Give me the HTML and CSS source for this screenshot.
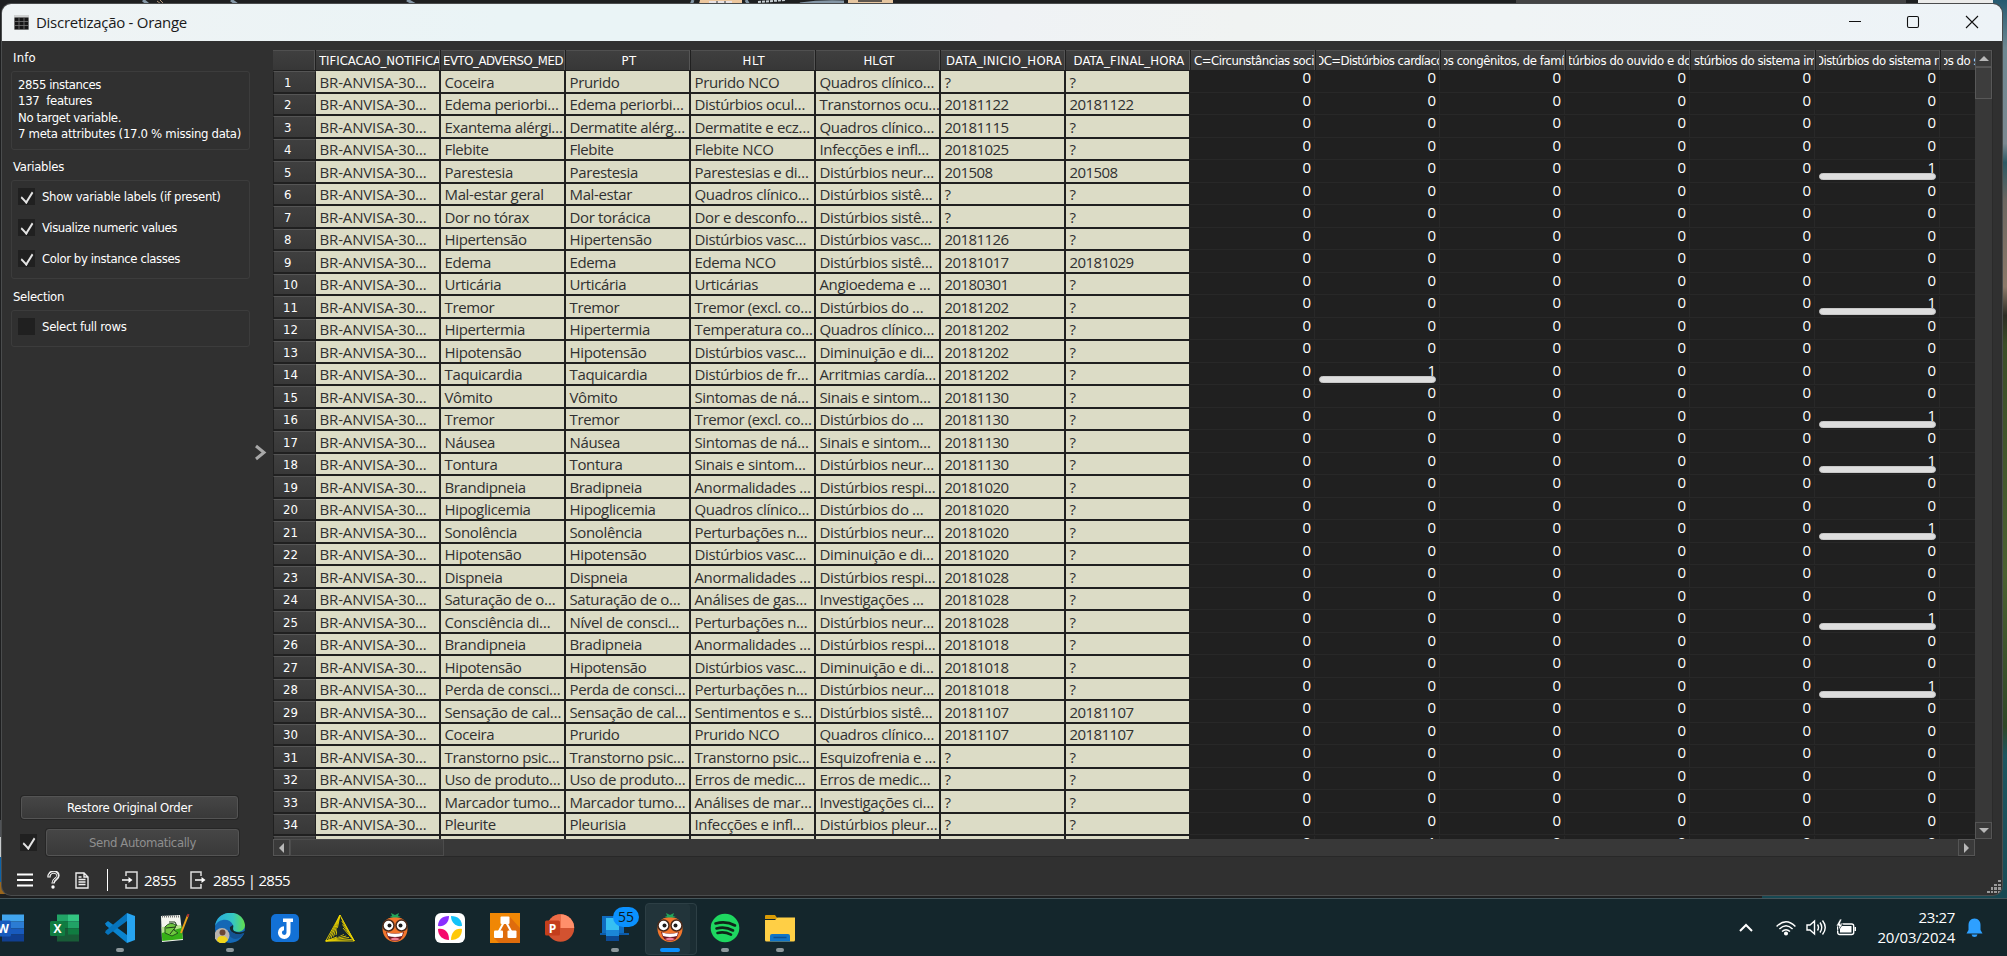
FILE: index.html
```
<!DOCTYPE html>
<html lang="pt">
<head>
<meta charset="utf-8">
<title>Discretização - Orange</title>
<link rel="stylesheet" href="styles.css">
</head>
<body>
<div class="desktop">
  <svg class="wallpaper" width="2007" height="956" viewBox="0 0 2007 956">
    <defs>
      <linearGradient id="photo" x1="0" y1="0" x2="0" y2="1">
        <stop offset="0" stop-color="#265a70"/><stop offset=".05" stop-color="#6d8791"/><stop offset=".15" stop-color="#7b8890"/>
        <stop offset=".17" stop-color="#2c5964"/><stop offset=".21" stop-color="#6c6660"/><stop offset=".3" stop-color="#8c7969"/>
        <stop offset=".33" stop-color="#2d2d25"/><stop offset=".36" stop-color="#3b4d27"/><stop offset=".6" stop-color="#4b6030"/>
        <stop offset=".76" stop-color="#304726"/><stop offset=".79" stop-color="#1d5560"/><stop offset="1" stop-color="#174852"/>
      </linearGradient>
    </defs>
    <rect width="2007" height="956" fill="#1e1f20"/>
    <rect x="1993" width="14" height="956" fill="url(#photo)"/>
    <rect x="1762" y="890" width="245" height="10" fill="#174852"/>
    <path d="M143 0l6 5M231 0l7 5M407 0l9 5M693 0l-2 5M746 0l3 5" stroke="#8496a5" stroke-width="3"/>
    <path d="M157 1l4 3M160 0l4 4" stroke="#b49a80"/>
    <path d="M700 0h42v4h-43z" fill="#edc79e"/><path d="M709 1h23v3h-23z" fill="#e8e0e2"/><path d="M717 1v3M725 1v3" stroke="#333"/>
    <path d="M848 0h45v4h-45z" fill="#e6c6a0"/><path d="M858 0h24v2h-24z" fill="#5e564e"/>
    <path d="M800 4q20-3 44-2" stroke="#8496a5" stroke-width="3" fill="none"/>
    <path d="M758 2l28-2" stroke="#c9cfd3" stroke-width="2" stroke-dasharray="3 1"/>
    <rect x="1516" width="390" height="3" fill="#444"/>
    <rect x="1918" width="75" height="4" fill="#ebebea"/>
    <rect y="820" width="3" height="17" fill="#505357"/><rect y="837" width="3" height="20" fill="#c9cbcc"/><rect y="857" width="3" height="25" fill="#0d63a8"/><rect y="882" width="10" height="12" fill="#9a661c"/>
  </svg>

  <main class="window">
    <header class="titlebar">
      <svg class="appicon" width="15" height="15" viewBox="0 0 15 15"><rect width="15" height="15" fill="#cfd1d1"/><path d="M.5 2.500h14v12H.5z" fill="#161616"/><path d="M0 6.500h15M0 10.500h15M5 2v13M10 2v13" stroke="#777" stroke-width=".8"/></svg>
      <span class="title seg" data-w="150">Discretização - Orange</span>
      <svg class="winbtns" width="130" height="14" viewBox="0 0 130 14" fill="none" stroke="#111" stroke-width="1.1"><path d="M0 6.500h12"/><rect x="58.500" y="1.500" width="11" height="11" rx="1.500"/><path d="M117 1l12 12M129 1l-12 12"/></svg>
    </header>

    <div class="content">
      <aside class="side">
        <h2 class="group" data-w="22">Info</h2>
        <section class="box info">
          <p><span data-w="82">2855 instances</span></p>
          <p><span data-w="73">137&nbsp; features</span></p>
          <p><span data-w="102">No target variable.</span></p>
          <p><span data-w="222">7 meta attributes (17.0 % missing data)</span></p>
        </section>
        <h2 class="group" data-w="50">Variables</h2>
        <section class="box vars">
          <label class="check"><i class="tick on"></i><span data-w="177.5">Show variable labels (if present)</span></label>
          <label class="check"><i class="tick on"></i><span data-w="134">Visualize numeric values</span></label>
          <label class="check"><i class="tick on"></i><span data-w="137">Color by instance classes</span></label>
        </section>
        <h2 class="group" data-w="50">Selection</h2>
        <section class="box selbox">
          <label class="check"><i class="tick"></i><span data-w="83.5">Select full rows</span></label>
        </section>
        <div class="spacer"></div>
        <button class="btn restore"><span data-w="124">Restore Original Order</span></button>
        <div class="sendrow"><i class="tick on"></i><button class="btn send"><span data-w="106">Send Automatically</span></button></div>
      </aside>

      <div class="handle"><svg width="13" height="17" viewBox="0 0 13 17"><path d="M2 2l8 6.500L2 15" fill="none" stroke="#a8a8a8" stroke-width="3"/></svg></div>

      <section class="tablebox">
        <div class="viewport">
          <div class="headrow" id="head"></div>
          <div class="rows" id="rows"></div>
        </div>
        <div class="vbar">
          <div class="sbtn"><i class="arrow up"></i></div>
          <div class="vthumb"></div>
          <div class="fill"></div>
          <div class="sbtn"><i class="arrow down"></i></div>
        </div>
        <div class="hbar">
          <div class="sbtn"><i class="arrow left"></i></div>
          <div class="hthumb"></div>
          <div class="fill"></div>
          <div class="sbtn"><i class="arrow right"></i></div>
        </div>
      </section>
    </div>

    <footer class="status">
      <svg width="16" height="14" viewBox="0 0 16 14"><path d="M0 1.500h16M0 7h16M0 12.500h16" stroke="#fff" stroke-width="2.200"/></svg>
      <svg class="help" width="13" height="18" viewBox="0 0 13 18" fill="none"><path d="M2 6.500C1.500-.5 11-.5 11 4.500c0 4-5 3.500-5 8" stroke="#eee" stroke-width="3.400"/><path d="M2 5.500C2 .5 10.500 0 10.500 4.500c0 3.500-4.500 3.500-4.500 7" stroke="#333" stroke-width="1"/><circle cx="6" cy="16" r="1.700" fill="#fff"/></svg>
      <svg class="doc" width="14" height="17" viewBox="0 0 14 17" fill="none" stroke="#eee" stroke-width="1.400"><path d="M1 1h8l4 4v11H1zM9 1v4h4M3.500 7.500h7M3.500 10h7M3.500 12.500h7M3.500 5h3"/></svg>
      <i class="vsep"></i>
      <svg class="in" width="16" height="18" viewBox="0 0 16 18" fill="none" stroke="#ddd" stroke-width="1.500"><path d="M4 5V1h11v16H4v-4"/><path d="M0 9h8" stroke="#fff"/><path d="M6.500 6l4 3-4 3z" fill="#fff" stroke="none"/></svg>
      <span class="seg n1" data-w="31">2855</span>
      <svg class="out" width="16" height="18" viewBox="0 0 16 18" fill="none" stroke="#ddd" stroke-width="1.500"><path d="M11 5V1H1v16h10v-4"/><path d="M5 9h8" stroke="#fff"/><path d="M11.500 6l4 3-4 3z" fill="#fff" stroke="none"/></svg>
      <span class="seg n2" data-w="76">2855 | 2855</span>
      <svg class="grip" width="14" height="13" viewBox="0 0 14 13" fill="#999"><path d="M11 0h3v2h-3zM7 4h3v2H7zM11 4h3v2h-3zM4 7h2v3H4zM7 7h3v3H7zM11 7h3v3h-3zM0 11h3v2H0zM4 11h2v2H4zM7 11h3v2H7zM11 11h3v2h-3z"/></svg>
    </footer>
  </main>

  <nav class="taskbar">
    <div class="apps">
      <div class="slot"><svg width="30" height="30" viewBox="0 0 30 30"><path d="M7 1.500h22v7H7z" fill="#41a5ee"/><path d="M7 8.500h22v7H7z" fill="#2b7cd3"/><path d="M7 15.500h22v6H7z" fill="#185abd"/><path d="M7 21.500h22v7H7z" fill="#103f91"/><rect y="7.500" width="16" height="16" rx="1.500" fill="#185abd"/><text x="8" y="20" class="logo" fill="#fff">W</text></svg></div>
      <div class="slot"><svg width="30" height="30" viewBox="0 0 30 30"><path d="M7 1.500h11v7H7z" fill="#21a366"/><path d="M18 1.500h11v7H18z" fill="#33c481"/><path d="M7 8.500h11v7H7z" fill="#107c41"/><path d="M18 8.500h11v7H18z" fill="#21a366"/><path d="M7 15.500h22v13H7z" fill="#185c37"/><path d="M18 15.500h11v6H18z" fill="#107c41"/><rect y="8" width="15" height="15" rx="1.500" fill="#107c41"/><text x="7.500" y="20" class="logo" fill="#fff">X</text></svg></div>
      <div class="slot run"><svg width="30" height="30" viewBox="0 0 30 30"><path d="M0 10.500l3-2.500 19 14v8L1 12.500z" fill="#0a84cf"/><path d="M0 19.500L3 22 22 8V0L1 17.500z" fill="#0674bd"/><path d="M22 0l8 3v24l-8 3z" fill="#27a4f0"/></svg></div>
      <div class="slot"><svg width="30" height="30" viewBox="0 0 30 30"><path d="M1 3l19-1 3 25-21 2z" fill="#f3f5ee"/><path d="M1.700 18l20-5 1.200 13L2.200 28z" fill="#36b016"/><path d="M1.700 14l19-2 .5 3-19.300 5z" fill="#b7e48e"/><path d="M5 14q5-6 11-2l-2 5 4 3-6 3-7-3z" fill="#6fc83f" stroke="#23551c"/><path d="M9 9l6 0 2 4M6 15l10-1M10 21l4-5" stroke="#203a1a" fill="none"/><path d="M2 3.500h18" stroke="#777" stroke-width="2" stroke-dasharray="1 1"/><path d="M28 2l-7 18" stroke="#e9a31c" stroke-width="2"/><path d="M28.500 1l-1 3" stroke="#a33" stroke-width="2"/></svg></div>
      <div class="slot run"><svg width="30" height="30" viewBox="0 0 30 30"><defs><linearGradient id="eg"><stop offset="0" stop-color="#28a9dd"/><stop offset=".6" stop-color="#35c7c3"/><stop offset="1" stop-color="#62df4c"/></linearGradient></defs><circle cx="15" cy="15" r="15" fill="#1568b5"/><path d="M0 13C2-4 28-5 30 12c0 6-6 8-11 6-4-2 0-3-1-6C15 5 4 5 0 13z" fill="url(#eg)"/><path d="M15 14c-1 5 5 9 14 7l2-4c-3 3-9 3-12 1-2-2 0-4-1-6z" fill="#14292f"/><path d="M17 19q6 4 11 1 2 0 1 1-6 7-12 4-4-3-5-8z" fill="#145393"/><circle cx="7" cy="22.500" r="7.500" fill="#b9b4ae"/><circle cx="7.500" cy="19.500" r="3" fill="#6a4737"/><path d="M2 28q0-5 5-5t6 4l-3 3H5z" fill="#efd51b"/></svg></div>
      <div class="slot"><svg width="30" height="30" viewBox="0 0 30 30"><rect x="1" y="1" width="28" height="28" rx="5" fill="#1371d6"/><path d="M13 5.500h10v3.500h-2.500v10.500a6.300 6.300 0 1 1-6.500-6.200v4a2.300 2.300 0 1 0 2.500 2.200V9H13z" fill="#fff"/></svg></div>
      <div class="slot"><svg width="30" height="30" viewBox="0 0 30 30" fill="none" stroke="#ecd400" stroke-width=".9"><path d="M15 2L.8 28h28.400z"/><path d="M15 2L3.500 26.500M15 2L6 25M15 2L8.500 23.500M15 2l-4 20M29.200 28L16 4.500M29.200 28L16.800 8M29.200 28L17.500 11.500M29.200 28L18 15M.8 28l26-1.500M.8 28L24 24.500M.8 28l20.500-5M.8 28l18-6.500"/><path d="M12 14.500v10l8-4.500z" fill="#14262c" stroke="none"/></svg></div>
      <div class="slot"><svg width="30" height="30" viewBox="0 0 30 30"><g id="orange"><path d="M11 0l4 2 4-2-1 3 3 1-6 1.500L9.500 4l2.500-1z" fill="#23a65a"/><path d="M15 4.500C24 4 27.500 9 27.500 16S22 29 15 29 2.500 23 2.500 16 6 4 15 4.500z" fill="#f2762c"/><circle cx="8.500" cy="12.500" r="5.500" fill="#fff" stroke="#4a2a1b" stroke-width="1.500"/><circle cx="21.500" cy="12.500" r="5.500" fill="#fff" stroke="#4a2a1b" stroke-width="1.500"/><circle cx="9.500" cy="12.500" r="2" fill="#1d1b1b"/><circle cx="20.500" cy="12.500" r="2" fill="#1d1b1b"/><path d="M6 19q9 3 18 0-2 9-9 9t-9-9z" fill="#6b1720"/><path d="M7 19.500q8 2.500 16 0l-1 3.500q-7 2-14 0z" fill="#fff"/><path d="M10 26q5-3 10 0-5 3-10 0z" fill="#ef7d96"/></g></svg></div>
      <div class="slot"><svg width="30" height="30" viewBox="0 0 30 30"><rect width="30" height="30" rx="6" fill="#fff"/><path d="M3 13c0-6 4-10 11-10 0 7-5 11-11 10z" fill="#8a2eff"/><path d="M16 3c7 0 11 4 11 10-7 1-11-4-11-10z" fill="#14c3fa"/><path d="M3 16c7-1 11 3 11 11-6 0-11-4-11-11z" fill="#f5096d"/><path d="M27 16c0 7-4 11-11 11 0-7 4-12 11-11z" fill="#ffc90a"/></svg></div>
      <div class="slot"><svg width="30" height="30" viewBox="0 0 30 30"><rect width="30" height="30" fill="#f08705"/><path d="M20 4l10 11v15H9l-5-5z" fill="#df6c0c"/><path d="M14.500 8L8 20M15.500 8L22 20" stroke="#fff" stroke-width="2"/><rect x="10.500" y="3.500" width="9" height="7.500" rx="1" fill="#fff"/><rect x="4" y="17.500" width="9" height="7.500" rx="1" fill="#fff"/><rect x="17.500" y="17.500" width="9" height="7.500" rx="1" fill="#fff"/></svg></div>
      <div class="slot"><svg width="30" height="30" viewBox="0 0 30 30"><circle cx="15.500" cy="15" r="13.700" fill="#d35230"/><path d="M15.500 1.300A13.700 13.700 0 0 1 29.200 15H15.500z" fill="#ff8f6b"/><path d="M15.500 1.300A13.700 13.700 0 0 0 2 15h13.500z" fill="#ed6c47"/><rect y="7.500" width="15" height="15" rx="1.500" fill="#c43e1c"/><text x="7.500" y="19.500" class="logo" fill="#fff">P</text></svg></div>
      <div class="slot run"><svg width="30" height="30" viewBox="0 0 30 30"><path d="M2 3h22v17H2z" fill="#0f6cc0"/><path d="M0 20h29v2H0z" fill="#0b5bab"/><path d="M6 5h13v12H6z" fill="#36c0f2"/><path d="M6 17h13v6H6z" fill="#1b87d7"/><path d="M6 23h13v5H6z" fill="#0c4a94"/></svg><span class="badge seg">55</span></div>
      <div class="slot active"><svg width="30" height="30" viewBox="0 0 30 30"><use href="#orange"/></svg></div>
      <div class="slot run"><svg width="30" height="30" viewBox="0 0 30 30"><circle cx="15" cy="15" r="14.300" fill="#1ed760"/><path d="M5.500 10.500Q16 7.500 25 12.500M6.500 15.500q8.500-2.500 16.500 2M7.500 20q7-1.800 13.500 1.700" stroke="#10251a" stroke-width="2.600" stroke-linecap="round" fill="none"/></svg></div>
      <div class="slot run"><svg width="30" height="30" viewBox="0 0 30 30"><path d="M0 3q0-1 1-1h9l3 4H0z" fill="#d99b06"/><path d="M0 7h10l2.500-2.500H30V27q0 1.500-1.500 1.500h-27Q0 28.500 0 27z" fill="#ffcf45"/><path d="M5 28.500V23q0-2 2-2h16q2 0 2 2v5.500z" fill="#0f75c8"/><path d="M8.500 24.500h13" stroke="#0a4f93" stroke-width="1.500"/></svg></div>
    </div>
    <div class="tray">
      <svg class="chev" width="14" height="9" viewBox="0 0 14 9"><path d="M1 8l6-6 6 6" fill="none" stroke="#fff" stroke-width="2"/></svg>
      <svg class="wifi" width="20" height="16" viewBox="0 0 20 16" fill="none" stroke="#fff" stroke-width="1.500"><path d="M.6 6.500Q10-3 19.400 6.500M3.400 9Q10 2.500 16.600 9M6 11.500q4-3.500 8 0"/><circle cx="10" cy="13.500" r="1.300" fill="#fff"/></svg>
      <svg class="vol" width="21" height="17" viewBox="0 0 21 17" fill="none" stroke="#fff" stroke-width="1.400"><path d="M1 6h3l4.500-4v13L4 11H1zM11.500 5.500q2 3 0 6M14 3.500q3.500 5 0 10M16.500 1.500q5.500 7 0 14"/></svg>
      <svg class="bat" width="21" height="17" viewBox="0 0 21 17"><rect x="1.700" y="5" width="16" height="10.500" rx="2" fill="none" stroke="#fff" stroke-width="1.400"/><path d="M4 7h11.500v6.500H4z" fill="#fff"/><path d="M18.500 8h1.500v4h-1.500z" fill="#fff"/><path d="M4 0L0 7h3l-1 5 5-7H4l2-5z" fill="#fff" stroke="#14262c" stroke-width=".7"/></svg>
      <div class="clock seg"><span data-w="35.5">23:27</span><span data-w="76.5">20/03/2024</span></div>
      <svg class="bell" width="17" height="20" viewBox="0 0 17 20" fill="#2ea0ff"><path d="M8.500.5c4 0 6 3 6 6.500v5l2 3.500H.5l2-3.500V7c0-3.500 2-6.500 6-6.500zM5.500 16.500h6q-.5 2.500-3 2.500t-3-2.500z"/></svg>
    </div>
  </nav>
</div>
<script src="app.js"></script>
</body>
</html>
```
FILE: styles.css
```
* { box-sizing: border-box; }
body { margin: 0; overflow: hidden; color: #fff; font: 13px/16px "DejaVu Sans Condensed", "DejaVu Sans", sans-serif; }
p, h2 { margin: 0; font-weight: 400; font-size: 13px; }
svg { display: block; flex: none; }
span { white-space: pre; }
.seg { font-family: "Open Sans", "Noto Sans", sans-serif; }

.desktop { position: relative; width: 2007px; height: 956px; overflow: hidden; display: flex; flex-direction: column; }
.wallpaper { position: absolute; left: 0; top: 0; }

/* window */
.window { position: relative; flex: none; width: 2000px; height: 891px; margin: 4px 0 0 2px; background: #303030; border-radius: 9px; overflow: hidden; display: flex; flex-direction: column; box-shadow: 0 0 0 1px #4a4c4d; }
.titlebar { flex: none; height: 37px; display: flex; align-items: center; padding-left: 12px; background: linear-gradient(90deg, #eff3f4 0, #eaf4f6 25%, #eaf4f6 42%, #eff2f5 50%, #f0f3f2 62%, #f0f4f5 75%, #edf3f7 100%); color: #1a1a1a; }
.title { margin-left: 7px; font-size: 15px; margin-top: -2px; }
.winbtns { margin-left: auto; margin-right: 23px; margin-top: -1px; }
.content { flex: none; height: 816px; display: flex; }

/* side panel */
.side { width: 248px; flex: none; display: flex; flex-direction: column; align-items: flex-start; padding: 9px 0 1px 9px; }
.group { margin-left: 2px; height: 21px; white-space: nowrap; }
.box { width: 239px; border: 1px solid #3c3c3c; border-radius: 3px; padding-left: 6px; }
.info { height: 79px; padding-top: 5px; margin-bottom: 9px; }
.info p { line-height: 16.300px; }
.vars { height: 99px; margin-bottom: 10px; }
.vars, .selbox { padding-top: 6px; }
.selbox { height: 37px; }
.check { display: flex; align-items: center; gap: 7px; height: 18px; margin-bottom: 13px; }
.check span { padding-top: 2px; }
.tick { position: relative; flex: none; width: 17px; height: 17px; background: #202020; }
.tick.on::after { content: ""; position: absolute; left: 5px; top: 1px; width: 6px; height: 11px; border: solid #e4e4e4; border-width: 0 2.500px 2.500px 0; transform: rotate(32deg) skewY(14deg); }
.spacer { flex: 1; }
.btn { font: inherit; color: #fff; padding: 0; border: 1px solid #545454; border-radius: 3px; background: linear-gradient(#464646, #393939); box-shadow: 0 0 0 1px #262626; display: flex; align-items: center; justify-content: center; }
.restore { width: 217px; height: 23px; margin: 0 0 10px 10px; }
.sendrow { display: flex; align-items: center; gap: 9px; margin-left: 9px; }
.send { width: 193px; height: 27px; color: #8f8f8f; }
.sendrow .tick { margin-bottom: 1px; }
.handle { width: 23px; flex: none; display: flex; align-items: center; padding-left: 4px; padding-top: 6px; }

/* data table */
.tablebox { margin-top: 9px; width: 1720px; height: 807px; display: grid; grid-template-columns: 1702px 18px; grid-template-rows: 789px 18px; }
.viewport { overflow: hidden; background: #202020; }
.headrow { display: grid; grid-template-columns: 43px repeat(14, 125px); height: 21px; width: 1793px; background: #202020; }
.hcell { height: 20px; border-top: 1px solid #505050; border-right: 1px solid #555; background: linear-gradient(#3f3f3f, #373737); overflow: hidden; padding-left: 3px; margin-right: 1px; display: flex; align-items: center; }
.hcell .clip { overflow: hidden; flex: 1; line-height: 19px; white-space: nowrap; }
.hcell .clip.mid { text-align: center; }
.hcell span { display: inline-block; }
.row { display: grid; grid-template-columns: 43px repeat(14, 125px); height: 22px; width: 1793px; }
.row:nth-child(odd) { height: 23px; }
.num { background: linear-gradient(#3f3f3f, #383838); border: 1px solid #202020; border-top: 1px solid #555; margin-bottom: 1px; display: flex; align-items: center; padding-left: 9px; padding-top: 1px; }
.num.d1 { padding-left: 10px; }
.meta { background: #dcdcc6; color: #303030; margin: 0 2px 2px 0; padding-left: 3.500px; overflow: hidden; white-space: nowrap; font: 15px/22px "Open Sans", "Noto Sans", sans-serif; letter-spacing: -.36px; }
.row:nth-child(even) .meta { line-height: 20px; }
.meta.id { letter-spacing: -.15px; }
.meta.date { letter-spacing: -.58px; }
.val { position: relative; border-right: 1px solid #282828; border-bottom: 1px solid #282828; margin: 0 1px 1px -1px; text-align: right; padding-right: 3px; font: 15px/12px "Open Sans", "Noto Sans", sans-serif; }
.bar { position: absolute; left: 4px; top: 12px; width: 117px; height: 7px; border-radius: 4px; background: #dedede; border: 1px solid #c8c8c8; }

/* scrollbars */
.vbar { background: #383838; display: flex; flex-direction: column; border-right: 1px solid #2a2a2a; }
.hbar { background: #383838; display: flex; border-bottom: 1px solid #282828; }
.sbtn { flex: none; width: 17px; height: 17px; border: 1px solid #555; background: #3a3a3a; display: flex; align-items: center; justify-content: center; }
.fill { flex: 1; }
.vthumb { width: 17px; height: 32px; border: 1px solid #585858; background: #3d3d3d; }
.hthumb { width: 154px; border: 1px solid #4c4c4c; background: linear-gradient(#404040, #383838); }
.arrow { width: 0; height: 0; border: 5px solid transparent; }
.up { border-top: 0; border-bottom-color: #b8b8b8; }
.down { border-bottom: 0; border-top-color: #b8b8b8; }
.left { border-left: 0; border-right-color: #b8b8b8; }
.right { border-right: 0; border-left-color: #b8b8b8; }

/* status bar */
.status { flex: 1; display: flex; align-items: center; padding: 8px 1px 0 15px; font-size: 15px; }
.status .seg { margin-top: -1px; }
.help { margin-left: 14px; }
.doc { margin-left: 15px; }
.vsep { width: 1px; height: 22px; background: #fff; margin: 0 14px 0 18px; }
.n1 { margin-left: 6px; }
.out { margin-left: 14px; }
.n2 { margin-left: 7px; }
.grip { margin-left: auto; align-self: flex-end; margin-bottom: 2px; }

/* taskbar */
.taskbar { position: relative; flex: none; margin-top: 3px; height: 58px; border-top: 1px solid #45555a; background: #14262c; display: flex; justify-content: space-between; }
.apps { display: flex; margin-left: -18px; }
.slot { position: relative; width: 55px; display: flex; justify-content: center; padding-top: 14px; }
.slot.run::after, .slot.active::after { content: ""; position: absolute; bottom: 4px; width: 8px; height: 4px; border-radius: 2px; background: #8d989c; }
.slot.active::after { width: 20px; background: #0a91ff; }
.slot.active::before { content: ""; position: absolute; left: 3px; top: 4px; width: 50px; height: 50px; border-radius: 4px; background: #22343a; border: 1px solid #2d3f45; box-shadow: inset -6px 0 0 #1b2d33; }
.slot svg { position: relative; }
.logo { font: bold 12px "Open Sans", sans-serif; text-anchor: middle; }
.badge { position: absolute; left: 26px; top: 8px; width: 26px; height: 20px; border-radius: 10px; background: #0a91ff; color: #0b1a22; font-size: 14px; line-height: 19px; text-align: center; }
.tray { display: flex; align-items: center; padding-right: 24px; }
.wifi { margin-left: 23px; }
.vol { margin-left: 10px; }
.bat { margin-left: 9px; }
.clock { width: 98px; display: flex; flex-direction: column; align-items: flex-end; font-size: 15px; line-height: 20px; margin-bottom: 2px; }
.bell { margin-left: 11px; }
```
FILE: app.js
```
// Column captions: text, width, left offset inside the cell (null = centred)
const columns = [
  ["TIFICACAO_NOTIFICA", 121, 0], ["EVTO_ADVERSO_MED", 119, -1], ["PT", 14, null], ["HLT", 22, null],
  ["HLGT", 30, null], ["DATA_INICIO_HORA", 115, null], ["DATA_FINAL_HORA", 110, null],
  ["C=Circunstâncias soci", 119, 0], ["OC=Distúrbios cardíaco", 127, -4], ["os congênitos, de famí", 122, -3],
  ["túrbios do ouvido e do", 122, -1], ["stúrbios do sistema im", 122, 0], ["Distúrbios do sistema n", 125, -4],
  ["os do sistema", 74, -3]
];

const rows = `Coceira|Prurido|Prurido NCO|Quadros clínico…|?|?
Edema periorbi…|Edema periorbi…|Distúrbios ocul…|Transtornos ocu…|20181122|20181122
Exantema alérgi…|Dermatite alérg…|Dermatite e ecz…|Quadros clínico…|20181115|?
Flebite|Flebite|Flebite NCO|Infecções e infl…|20181025|?
Parestesia|Parestesia|Parestesias e di…|Distúrbios neur…|201508|201508
Mal-estar geral|Mal-estar|Quadros clínico…|Distúrbios sistê…|?|?
Dor no tórax|Dor torácica|Dor e desconfo…|Distúrbios sistê…|?|?
Hipertensão|Hipertensão|Distúrbios vasc…|Distúrbios vasc…|20181126|?
Edema|Edema|Edema NCO|Distúrbios sistê…|20181017|20181029
Urticária|Urticária|Urticárias|Angioedema e …|20180301|?
Tremor|Tremor|Tremor (excl. co…|Distúrbios do …|20181202|?
Hipertermia|Hipertermia|Temperatura co…|Quadros clínico…|20181202|?
Hipotensão|Hipotensão|Distúrbios vasc…|Diminuição e di…|20181202|?
Taquicardia|Taquicardia|Distúrbios de fr…|Arritmias cardía…|20181202|?
Vômito|Vômito|Sintomas de ná…|Sinais e sintom…|20181130|?
Tremor|Tremor|Tremor (excl. co…|Distúrbios do …|20181130|?
Náusea|Náusea|Sintomas de ná…|Sinais e sintom…|20181130|?
Tontura|Tontura|Sinais e sintom…|Distúrbios neur…|20181130|?
Brandipneia|Bradipneia|Anormalidades …|Distúrbios respi…|20181020|?
Hipoglicemia|Hipoglicemia|Quadros clínico…|Distúrbios do …|20181020|?
Sonolência|Sonolência|Perturbações n…|Distúrbios neur…|20181020|?
Hipotensão|Hipotensão|Distúrbios vasc…|Diminuição e di…|20181020|?
Dispneia|Dispneia|Anormalidades …|Distúrbios respi…|20181028|?
Saturação de o…|Saturação de o…|Análises de gas…|Investigações …|20181028|?
Consciência di…|Nível de consci…|Perturbações n…|Distúrbios neur…|20181028|?
Brandipneia|Bradipneia|Anormalidades …|Distúrbios respi…|20181018|?
Hipotensão|Hipotensão|Distúrbios vasc…|Diminuição e di…|20181018|?
Perda de consci…|Perda de consci…|Perturbações n…|Distúrbios neur…|20181018|?
Sensação de cal…|Sensação de cal…|Sentimentos e s…|Distúrbios sistê…|20181107|20181107
Coceira|Prurido|Prurido NCO|Quadros clínico…|20181107|20181107
Transtorno psic…|Transtorno psic…|Transtorno psic…|Esquizofrenia e …|?|?
Uso de produto…|Uso de produto…|Erros de medic…|Erros de medic…|?|?
Marcador tumo…|Marcador tumo…|Análises de mar…|Investigações ci…|?|?
Pleurite|Pleurisia|Infecções e infl…|Distúrbios pleur…|?|?
|||||`.split("\n");

// Cells holding 1, as "row:column"
const ones = new Set(["5:5", "11:5", "14:1", "16:5", "18:5", "21:5", "25:5", "28:5", "35:1"]);

document.getElementById("head").innerHTML = '<div class="hcell"></div>' + columns.map(([text, w, x]) =>
  `<div class="hcell"><div class="clip${x === null ? " mid" : ""}"><span data-w="${w}" style="margin-left:${x || 0}px">${text}</span></div></div>`).join("");

document.getElementById("rows").innerHTML = rows.map((line, i) => {
  const n = i + 1;
  const last = n === rows.length;
  let html = `<div class="num${n < 10 ? " d1" : ""}">${last ? "" : n}</div>`;
  html += `<div class="meta id">${last ? "" : "BR-ANVISA-30…"}</div>`;
  html += line.split("|").map((t, c) => `<div class="meta${c > 3 ? " date" : ""}">${t}</div>`).join("");
  for (let c = 0; c < 7; c++) {
    const one = ones.has(n + ":" + c);
    html += `<div class="val">${c === 6 ? "" : one ? "1" : "0"}${one && !last ? '<i class="bar"></i>' : ""}</div>`;
  }
  return `<div class="row">${html}</div>`;
}).join("");

// Adjust tracking so that each label fills its nominal width
document.querySelectorAll("[data-w]").forEach(el => {
  const range = document.createRange();
  range.selectNodeContents(el);
  const natural = range.getBoundingClientRect().width;
  el.style.letterSpacing = (parseFloat(el.dataset.w) + 1 - natural) / el.textContent.length + "px";
});
```
